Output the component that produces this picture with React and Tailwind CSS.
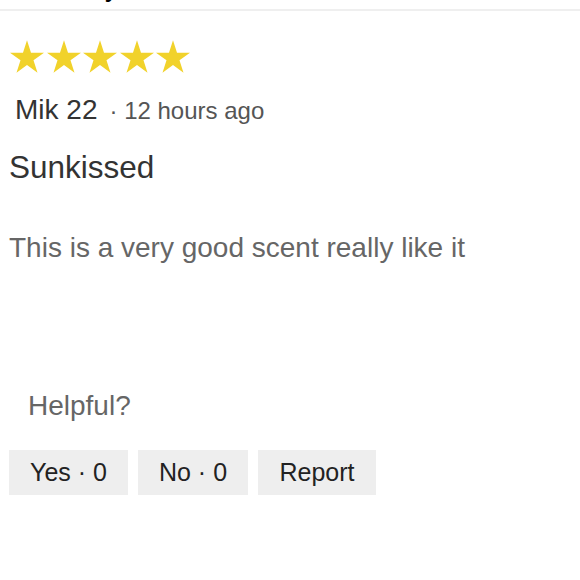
import React from 'react';

const font = { fontFamily: '"Liberation Sans", Arial, sans-serif' };

function Star() {
    return (
        <svg viewBox="0 0 100 95.1" className="w-[34px] h-[33px] block" aria-hidden="true">
            <polygon
                fill="#f1d22b"
                points="50,0 61.8,36.3 100,36.3 69.1,58.8 80.9,95.1 50,72.7 19.1,95.1 30.9,58.8 0,36.3 38.2,36.3"
            />
        </svg>
    );
}

export default function App() {
    const buttons = [
        { label: 'Yes · 0', w: 'w-[119px]' },
        { label: 'No · 0', w: 'w-[110px]' },
        { label: 'Report', w: 'w-[118px]' },
    ];

    return (
        <div className="w-[580px] h-[580px] bg-white overflow-hidden" style={font}>
            {/* tail of the previous line, cut by the viewport */}
            <div className="h-[9px] overflow-hidden">
                <div className="mt-[-27px] ml-[10px] text-[28px] leading-none text-black">Recently</div>
            </div>
            <div className="h-[2px] bg-[#efefef]" />

            <div className="flex gap-[2.5px] ml-[10px] mt-[29px]">
                <Star />
                <Star />
                <Star />
                <Star />
                <Star />
            </div>

            <div className="flex items-baseline ml-[15px] mt-[23px]">
                <span className="text-[28px] leading-none text-[#333]">Mik 22</span>
                <span className="ml-[12px] text-[24px] leading-none text-[#555]">· 12 hours ago</span>
            </div>

            <h2 className="ml-[9px] mt-[28px] text-[31.5px] leading-none text-[#333]">Sunkissed</h2>

            <p className="ml-[9px] mt-[50px] text-[28px] leading-none text-[#666]">
                This is a very good scent really like it
            </p>

            <p className="ml-[28px] mt-[130px] text-[28px] leading-none text-[#666]">Helpful?</p>

            <div className="flex gap-[10px] ml-[9px] mt-[30px]">
                {buttons.map((b) => (
                    <button
                        key={b.label}
                        className={`${b.w} h-[45px] bg-[#eeeeee] text-[25px] leading-none text-[#222] flex items-center justify-center`}
                    >
                        {b.label}
                    </button>
                ))}
            </div>
        </div>
    );
}
